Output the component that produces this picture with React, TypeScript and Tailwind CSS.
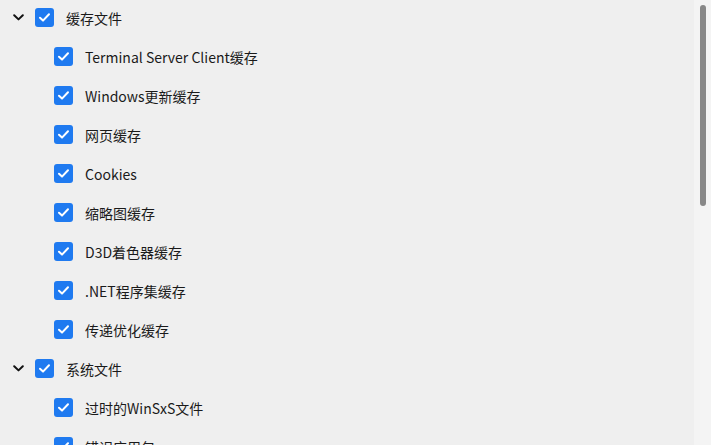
import React from "react";

type Item = { label: string; level: 0 | 1 };

const items: Item[] = [
  { label: "缓存文件", level: 0 },
  { label: "Terminal Server Client缓存", level: 1 },
  { label: "Windows更新缓存", level: 1 },
  { label: "网页缓存", level: 1 },
  { label: "Cookies", level: 1 },
  { label: "缩略图缓存", level: 1 },
  { label: "D3D着色器缓存", level: 1 },
  { label: ".NET程序集缓存", level: 1 },
  { label: "传递优化缓存", level: 1 },
  { label: "系统文件", level: 0 },
  { label: "过时的WinSxS文件", level: 1 },
  { label: "错误应用包", level: 1 },
];

function Check() {
  return (
    <span className="w-[19px] h-[19px] rounded-[3px] bg-[#1f7af0] flex items-center justify-center shrink-0">
      <svg width="13" height="13" viewBox="0 0 13 13" fill="none">
        <path d="M2 6.8 L5 9.6 L11 3.2" stroke="white" strokeWidth="2" strokeLinecap="round" strokeLinejoin="round" />
      </svg>
    </span>
  );
}

function Chevron() {
  return (
    <svg width="11" height="7" viewBox="0 0 11 7" fill="none">
      <path d="M1.2 1.2 L5.5 5.4 L9.8 1.2" stroke="#111" strokeWidth="2" strokeLinecap="round" strokeLinejoin="round" />
    </svg>
  );
}

export default function App() {
  return (
    <div
      className="w-[711px] h-[445px] overflow-hidden flex bg-[#efefef] text-[#1a1a1a]"
      style={{ fontFamily: '"Microsoft YaHei", "Noto Sans CJK SC", "Noto Sans", sans-serif' }}
    >
      <div className="flex-1 flex flex-col mt-[-2px]">
        {items.map((it, i) => (
          <div key={i} className="h-[39px] flex items-center shrink-0">
            {it.level === 0 ? (
              <div className="flex items-center">
                <div className="w-[35px] flex justify-center pl-[1px]">
                  <Chevron />
                </div>
                <Check />
                <span className="ml-[12px] text-[14px] leading-none">{it.label}</span>
              </div>
            ) : (
              <div className="flex items-center pl-[54px]">
                <Check />
                <span className="ml-[12px] text-[14px] leading-none">{it.label}</span>
              </div>
            )}
          </div>
        ))}
      </div>
      <div className="w-[17px] h-full bg-[#f4f4f4] flex justify-center pt-[5px]">
        <div className="w-[6px] h-[201px] rounded-full bg-[#888888]" />
      </div>
    </div>
  );
}
